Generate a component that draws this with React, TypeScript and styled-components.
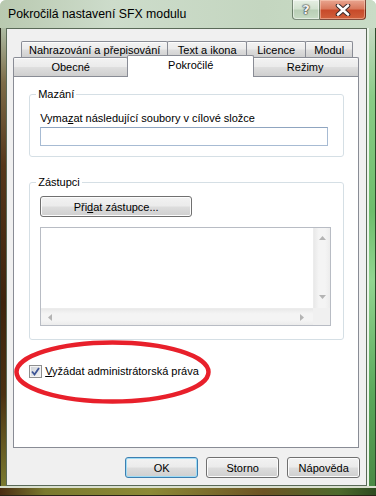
import React from 'react';
import styled, { createGlobalStyle } from 'styled-components';

const GlobalStyle = createGlobalStyle`
  html, body {
    margin: 0;
    padding: 0;
    background: #ffffff;
  }
  body {
    font-family: "Liberation Sans", Arial, sans-serif;
    font-size: 11px;
    color: #000;
  }
`;

const App = () => {
  return (
    <>
      <GlobalStyle />
      <StWindow>
        <StTitleBar>
          <StTitle>Pokročilá nastavení SFX modulu</StTitle>
          <StCaptionButtons>
            <StHelpButton>?</StHelpButton>
            <StCloseButton>
              <svg width="16" height="12" viewBox="0 0 16 12">
                <path d="M3 1.5 L13 10.5 M13 1.5 L3 10.5" stroke="#3a2a2a" strokeWidth="4.6" strokeLinecap="round" />
                <path d="M3 1.5 L13 10.5 M13 1.5 L3 10.5" stroke="#ffffff" strokeWidth="2.6" strokeLinecap="round" />
              </svg>
            </StCloseButton>
          </StCaptionButtons>
        </StTitleBar>

        <StBody>
          <StLeftEdge />
          <StClient>
            <StTabControl>
              <StBackRow>
                <StTab $width={147}>Nahrazování a přepisování</StTab>
                <StTab $width={80}>Text a ikona</StTab>
                <StTab $width={60}>Licence</StTab>
                <StTab $width={48}>Modul</StTab>
              </StBackRow>
              <StFrontRow>
                <StTab $width={115}>Obecné</StTab>
                <StActiveTab $width={127}>Pokročilé</StActiveTab>
                <StTab $width={108}>Režimy</StTab>
              </StFrontRow>

              <StTabPage>
                <StGroupBox>
                  <StLegend>Mazání</StLegend>
                  <StFieldLabel>
                    Vyma<u>z</u>at následující soubory v cílové složce
                  </StFieldLabel>
                  <StTextInput />
                </StGroupBox>

                <StGroupBox $gap={18}>
                  <StLegend>Zástupci</StLegend>
                  <StPushButton $width={152}>
                    Při<u>d</u>at zástupce...
                  </StPushButton>
                  <StListBox>
                    <StListContent />
                    <StVScroll>
                      <StArrow viewBox="0 0 7 4" width="7" height="4">
                        <path d="M0 4 L3.5 0 L7 4 Z" />
                      </StArrow>
                      <StArrow viewBox="0 0 7 4" width="7" height="4">
                        <path d="M0 0 L7 0 L3.5 4 Z" />
                      </StArrow>
                    </StVScroll>
                    <StHScroll>
                      <StArrow viewBox="0 0 4 7" width="4" height="7">
                        <path d="M4 0 L4 7 L0 3.5 Z" />
                      </StArrow>
                      <StArrow viewBox="0 0 4 7" width="4" height="7">
                        <path d="M0 0 L4 3.5 L0 7 Z" />
                      </StArrow>
                    </StHScroll>
                    <StScrollCorner />
                  </StListBox>
                </StGroupBox>

                <StCheckRow>
                  <StCheckBox>
                    <svg width="9" height="9" viewBox="0 0 9 9">
                      <path d="M1 4.5 L3.5 7.5 L8 1" fill="none" stroke="#3d5596" strokeWidth="1.8" />
                    </svg>
                  </StCheckBox>
                  <span>
                    <u>V</u>yžádat administrátorská práva
                  </span>
                </StCheckRow>

                <StHighlight width="197" height="64" viewBox="0 0 197 64">
                  <ellipse cx="98.5" cy="32" rx="96" ry="29.5" fill="none" stroke="#e8202b" strokeWidth="4.5" />
                </StHighlight>
              </StTabPage>
            </StTabControl>

            <StButtonRow>
              <StPushButton $width={73} $default>OK</StPushButton>
              <StPushButton $width={73}>Storno</StPushButton>
              <StPushButton $width={73}>Nápověda</StPushButton>
            </StButtonRow>
          </StClient>
          <StRightEdge />
        </StBody>
        <StBottomEdge />
      </StWindow>
    </>
  );
};

export default App;

const StWindow = styled.div`
  width: 376px;
  height: 496px;
  display: flex;
  flex-direction: column;
  box-sizing: border-box;
  border-radius: 6px 6px 0 0;
  overflow: hidden;
  background: #c6d7c3;
`;

const StTitleBar = styled.div`
  height: 28px;
  display: flex;
  justify-content: space-between;
  align-items: flex-start;
  padding: 0 10px 0 8px;
  background: linear-gradient(to right, #b9c9b0 0%, #cddccb 30%, #c4d6c0 70%, #c9dcc6 100%);
`;

const StTitle = styled.div`
  margin-top: 7px;
  font-family: "Liberation Sans", Arial, sans-serif;
  font-size: 12.3px;
  line-height: 15px;
  color: #000;
`;

const StCaptionButtons = styled.div`
  display: flex;
  height: 20px;
`;

const StHelpButton = styled.div`
  width: 28px;
  height: 20px;
  box-sizing: border-box;
  display: flex;
  align-items: center;
  justify-content: center;
  border: 1px solid rgba(40, 60, 40, 0.55);
  border-top: none;
  border-radius: 0 0 0 4px;
  background: linear-gradient(#e6efe4 0%, #d3e2d0 45%, #b9cfb6 55%, #c7dbc4 100%);
  box-shadow: inset 0 0 0 1px rgba(255, 255, 255, 0.5);
  font-family: "DejaVu Sans", sans-serif;
  font-weight: bold;
  font-size: 13px;
  color: #f4f4f4;
  text-shadow: 0 0 1px #333, 0 0 1px #333, 0 0 2px #333;
`;

const StCloseButton = styled.div`
  width: 46px;
  height: 20px;
  box-sizing: border-box;
  display: flex;
  align-items: center;
  justify-content: center;
  border: 1px solid rgba(60, 20, 10, 0.6);
  border-top: none;
  border-left: none;
  border-radius: 0 0 4px 0;
  background: linear-gradient(#e9a590 0%, #d97a5e 45%, #c84a2a 55%, #d0603c 100%);
  box-shadow: inset 0 0 0 1px rgba(255, 220, 200, 0.45);
`;

const StBody = styled.div`
  flex: 1;
  display: flex;
  min-height: 0;
`;

const StLeftEdge = styled.div`
  width: 7px;
  background: linear-gradient(#aebca4 0%, #7c6b48 12%, #55361a 30%, #3e230d 60%, #4a3012 80%, #7a7a30 100%);
  box-shadow: inset 1px 0 0 #2c2c20;
`;

const StRightEdge = styled.div`
  width: 10px;
  background: linear-gradient(#c6d9c2 0%, #8acc86 15%, #6ebd6b 40%, #93d590 55%, #5aa85a 80%, #4b8a46 100%);
  box-shadow: inset -1px 0 0 #2f4a2c, inset 2px 0 0 #eaf3e8;
`;

const StBottomEdge = styled.div`
  height: 10px;
  background: linear-gradient(to right, #4a2c12 0%, #7a7a2e 12%, #8c8a36 40%, #6d5424 70%, #4d6a2c 90%, #2e4a20 100%);
  box-shadow: inset 0 -1px 0 #2a2418, inset 0 2px 0 #d9dfcf;
`;

const StClient = styled.div`
  flex: 1;
  display: flex;
  flex-direction: column;
  padding: 12px 7px 7px 6px;
  border: 1px solid #5a6a58;
  background: #f0f0f0;
  box-sizing: border-box;
`;

const StTabControl = styled.div`
  display: flex;
  flex-direction: column;
`;

const StBackRow = styled.div`
  display: flex;
  height: 16px;
  padding-left: 8px;
`;

const StFrontRow = styled.div`
  display: flex;
  align-items: flex-start;
  height: 19px;
`;

const StTab = styled.div<{ $width: number }>`
  width: ${({ $width }) => $width}px;
  height: 100%;
  box-sizing: border-box;
  display: flex;
  align-items: center;
  justify-content: center;
  border: 1px solid #898c95;
  border-bottom: none;
  border-radius: 2px 2px 0 0;
  background: linear-gradient(#f3f3f3 0%, #ebebeb 48%, #dedede 52%, #cfcfcf 100%);
  box-shadow: inset 0 1px 0 #fcfcfc;
  font-size: 11px;
  line-height: 14px;
  white-space: nowrap;

  & + & {
    margin-left: -1px;
  }
`;

const StActiveTab = styled(StTab)`
  position: relative;
  z-index: 2;
  height: 22px;
  margin: -2px -2px 0 -3px;
  padding-bottom: 4px;
  background: #ffffff;
  box-shadow: none;

  & + ${StTab} {
    margin-left: -1px;
  }
`;

const StTabPage = styled.div`
  position: relative;
  height: 372px;
  box-sizing: border-box;
  border: 1px solid #898c95;
  background: #ffffff;
  padding: 10px 14px 0 15px;
  display: flex;
  flex-direction: column;
`;

const StGroupBox = styled.fieldset<{ $gap?: number }>`
  margin: ${({ $gap }) => $gap ?? 0}px 0 0 0;
  padding: 0 0 10px 10px;
  min-inline-size: 0;
  border: 1px solid #d5dfe5;
  border-radius: 3px;
  display: flex;
  flex-direction: column;
  align-items: flex-start;

  &:last-of-type {
    padding-bottom: 13px;
  }
`;

const StLegend = styled.legend`
  margin-left: -4px;
  padding: 0 2px;
  font-size: 11px;
  line-height: 14px;
  color: #000;
`;

const StFieldLabel = styled.div`
  margin-top: 10px;
  font-size: 11px;
  line-height: 14px;
`;

const StTextInput = styled.div`
  margin-top: 2px;
  width: 288px;
  height: 19px;
  box-sizing: border-box;
  border: 1px solid #a7bbd3;
  border-top-color: #8fa5c0;
  background: #ffffff;
`;

const StPushButton = styled.div<{ $width: number; $default?: boolean }>`
  margin-top: 7px;
  width: ${({ $width }) => $width}px;
  height: 21px;
  box-sizing: border-box;
  display: flex;
  align-items: center;
  justify-content: center;
  border: 1px solid ${({ $default }) => ($default ? '#3c7fb1' : '#707070')};
  border-radius: 3px;
  background: linear-gradient(#f2f2f2 0%, #ebebeb 49%, #dddddd 51%, #cfcfcf 100%);
  box-shadow: inset 0 0 0 1px ${({ $default }) => ($default ? '#9fdcf5' : '#fcfcfc')};
  font-size: 11px;
  line-height: 14px;
  white-space: nowrap;
`;

const StListBox = styled.div`
  margin-top: 10px;
  width: 291px;
  height: 99px;
  box-sizing: border-box;
  border: 1px solid #b8bcc4;
  display: grid;
  grid-template-columns: 1fr 17px;
  grid-template-rows: 1fr 17px;
  background: #ffffff;
`;

const StListContent = styled.div`
  background: #ffffff;
`;

const StVScroll = styled.div`
  display: flex;
  flex-direction: column;
  justify-content: space-between;
  align-items: center;
  padding: 8px 0 9px;
  background: linear-gradient(to right, #e9e9e9, #f4f4f4 30%, #f4f4f4 70%, #ececec);
  border-left: 1px solid #ececec;
`;

const StHScroll = styled.div`
  display: flex;
  justify-content: space-between;
  align-items: center;
  padding: 0 9px 0 7px;
  background: linear-gradient(#e9e9e9, #f4f4f4 30%, #f4f4f4 70%, #ececec);
  border-top: 1px solid #ececec;
`;

const StScrollCorner = styled.div`
  background: #f0f0f0;
`;

const StArrow = styled.svg`
  fill: #b4b4b4;
`;

const StCheckRow = styled.div`
  margin-top: 24px;
  display: flex;
  align-items: center;
  gap: 3px;
  height: 14px;
  font-size: 11px;
  line-height: 14px;
`;

const StCheckBox = styled.div`
  width: 13px;
  height: 13px;
  box-sizing: border-box;
  display: flex;
  align-items: center;
  justify-content: center;
  border: 1px solid #8e8f8f;
  background: linear-gradient(135deg, #cbcfd5 0%, #f6f6f6 100%);
  box-shadow: inset 0 0 0 1px #f4f4f4;
`;

const StHighlight = styled.svg`
  position: absolute;
  left: 0;
  top: 263px;
  pointer-events: none;
`;

const StButtonRow = styled.div`
  display: flex;
  justify-content: flex-end;
  gap: 8px;
  margin: 9px -1px 0 0;

  & > * {
    margin-top: 0;
  }
`;
